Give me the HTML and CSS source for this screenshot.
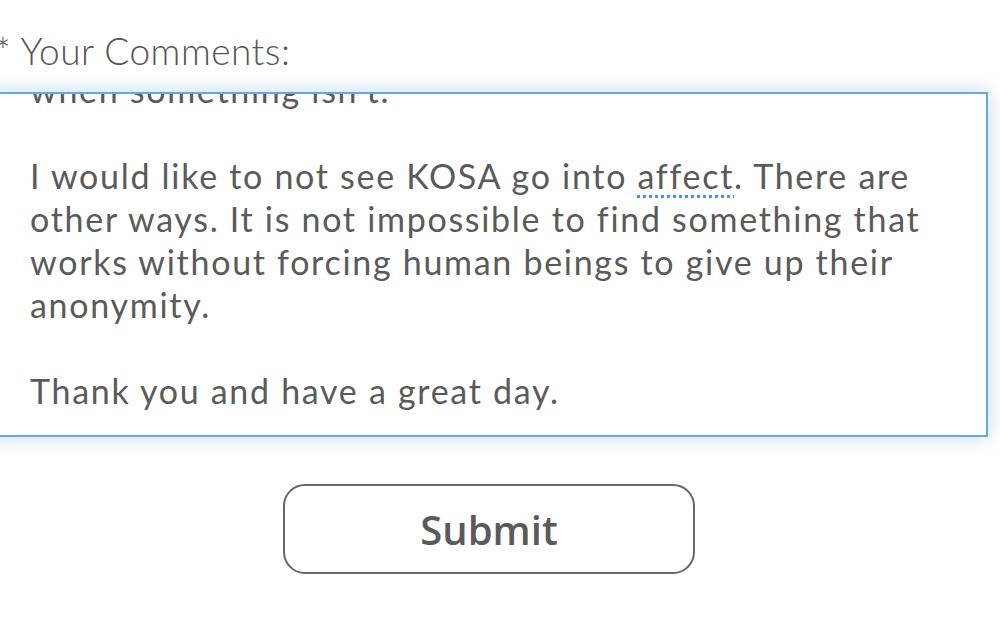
FILE: index.html
```html
<!DOCTYPE html>
<html lang="en">
<head>
    <meta charset="UTF-8">
    <meta name="viewport" content="width=device-width, initial-scale=1.0">
    <title>Your Comments</title>
    <link rel="stylesheet" href="styles.css">
</head>
<body>
    <form class="comment-form">
        <label class="field-label" for="comments">* Your Comments:</label>

        <div class="comment-box" id="comments">
            <div class="comment-text">
                <p>when something isn't.</p>
                <p>I would like to not see KOSA go into <span class="spell">affect</span>. There are other ways. It is not impossible to find something that works without forcing human beings to give up their anonymity.</p>
                <p>Thank you and have a great day.</p>
            </div>
        </div>

        <div class="actions">
            <button type="button" class="submit-btn">Submit</button>
        </div>
    </form>
</body>
</html>
```

FILE: styles.css
```css
* {
    box-sizing: border-box;
    margin: 0;
    padding: 0;
}

body {
    background-color: #ffffff;
    font-family: 'Lato', 'Open Sans', sans-serif;
    color: #555555;
    overflow: hidden;
}

.comment-form {
    margin-left: -12px;
    width: 1000px;
    padding-top: 26px;
}

.field-label {
    display: block;
    font-size: 37px;
    font-weight: 300;
    letter-spacing: 0.5px;
    color: #555555;
    line-height: 50px;
    margin-left: 7px;
    margin-bottom: 16px;
}

.comment-box {
    height: 345px;
    border: 2px solid #6aa6df;
    background-color: white;
    box-shadow: 0 0 20px rgba(106, 166, 223, 0.4);
    overflow: hidden;
    padding: 0 30px 0 40px;
}

.comment-text {
    margin-top: -26px;
    font-size: 34px;
    letter-spacing: 1.7px;
    line-height: 43px;
    color: #5a5a5a;
}

.comment-text p {
    margin-bottom: 43px;
}

.spell {
    text-decoration: underline dotted #4a90e2;
    text-decoration-thickness: 3px;
    text-underline-offset: 6px;
}

.actions {
    display: flex;
    justify-content: center;
    padding-top: 47px;
    padding-left: 2px;
}

.submit-btn {
    width: 412px;
    height: 90px;
    background-color: white;
    border: 2px solid #666666;
    border-radius: 22px;
    font-family: 'Open Sans', sans-serif;
    font-size: 40px;
    font-weight: 600;
    color: #5a5a5a;
    cursor: pointer;
}
```
